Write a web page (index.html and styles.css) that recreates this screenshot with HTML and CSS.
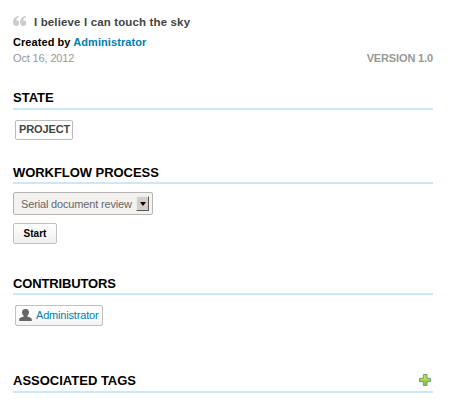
FILE: index.html
```html
<!DOCTYPE html>
<html lang="en">
<head>
<meta charset="utf-8">
<title>Document summary</title>
<link rel="stylesheet" href="styles.css">
</head>
<body>
<main class="summary">
  <header class="intro">
    <p class="description">
      <svg class="quote" width="14" height="10" viewBox="0 0 14 10"><path d="M5.800 0v1.400C4.200 1.900 3.200 2.900 3 4.300h.5C5.100 4.300 6.200 5.500 6.200 7.100S5 10 3.300 10C1.300 10 0 8.500 0 6.300 0 3 2 .5 5.800 0zM12.900 0v1.400c-1.600.5-2.600 1.500-2.800 2.900h.5c1.600 0 2.700 1.200 2.700 2.800S12.100 10 10.400 10C8.400 10 7.100 8.500 7.100 6.300 7.100 3 9.100.5 12.900 0z"/></svg>
      <span>I believe I can touch the sky</span>
    </p>
    <p class="creator">Created by <a>Administrator</a></p>
    <p class="meta"><span>Oct 16, 2012</span><strong>VERSION 1.0</strong></p>
  </header>

  <section class="state">
    <h3>STATE</h3>
    <span class="badge">PROJECT</span>
  </section>

  <section class="workflow">
    <h3 class="raised">WORKFLOW PROCESS</h3>
    <div class="select"><span>Serial document review</span><i class="arrow"><svg width="6" height="4" viewBox="0 0 6 4"><path d="M0 0h6L3 4z"/></svg></i></div>
    <button class="start">Start</button>
  </section>

  <section class="contributors">
    <h3 class="raised condensed">CONTRIBUTORS</h3>
    <a class="user"><svg width="13" height="12" viewBox="0 0 13 12"><path d="M6.500 0C9 0 10 1.300 10 3.300c0 1.500-.7 2.700-1.600 3.400v.7c.8.600 4.200.8 4.400 2.800V12H.2v-1.800c.2-2 3.600-2.200 4.400-2.800v-.7C3.700 6 3 4.800 3 3.300 3 1.300 4 0 6.500 0z"/></svg><span>Administrator</span></a>
  </section>

  <section class="tags">
    <h3>ASSOCIATED TAGS</h3>
    <svg class="add" width="12" height="12" viewBox="0 0 12 12">
      <defs><linearGradient id="leaf" x1="0" y1="0" x2="0" y2="1"><stop offset="0" stop-color="#b9d667"/><stop offset="1" stop-color="#86bb42"/></linearGradient></defs>
      <path fill="url(#leaf)" stroke="#6aa878" d="M4.500 .5h3.500v3.800h3.500v3.400H8v3.800H4.300V7.700H.5V4.300h3.800V.5z"/>
      <path fill="#c3d955" d="M5 2h2v3h3v1H2V5h3z"/>
    </svg>
  </section>
</main>
</body>
</html>
```

FILE: styles.css
```css
* { box-sizing: border-box; }

body {
  margin: 0;
  background: #fff;
  color: #000;
  font: 11px/16px "Liberation Sans", Arial, sans-serif;
}

.summary { width: 420px; margin-left: 13px; padding-top: 14px; }

p, h3 { margin: 0; }

.description {
  display: flex;
  align-items: flex-start;
  gap: 7px;
  height: 20px;
  color: #444;
  font-size: 11.5px;
  font-weight: bold;
  letter-spacing: .14px;
}
.quote { margin-top: 2px; fill: #ccc; }

.creator { font-weight: bold; letter-spacing: .07px; }
a { color: #0080ad; }

.meta {
  display: flex;
  justify-content: space-between;
  color: #999;
  letter-spacing: -.14px;
}

h3 {
  height: 22px;
  border-bottom: 2px solid #cae8fd;
  font-size: 13px;
  line-height: 20px;
}
.raised { line-height: 22px; letter-spacing: -.05px; }
.condensed { letter-spacing: -.15px; }

.state { height: 74px; margin-top: 22px; }
.workflow { height: 111px; }
.contributors { height: 98px; }

.badge {
  display: block;
  width: 58px;
  height: 20px;
  margin: 10px 0 0 2px;
  padding-left: 3px;
  border: 1px solid #bbb;
  border-radius: 2px;
  color: #444;
  font-weight: bold;
  line-height: 17px;
  letter-spacing: -.12px;
}

.select {
  display: flex;
  align-items: center;
  justify-content: space-between;
  width: 140px;
  height: 23px;
  margin-top: 8px;
  padding: 0 3px 0 7px;
  border: 1px solid #b4b4b4;
  border-radius: 2px;
  background: #f3f2f1;
  color: #666;
  letter-spacing: -.16px;
}
.arrow {
  display: flex;
  align-items: center;
  justify-content: center;
  width: 13px;
  height: 15px;
  border: 1px solid;
  border-color: #eee #555 #555 #eee;
  background: #d4d0c8;
}

.start {
  display: block;
  width: 44px;
  height: 21px;
  margin-top: 8px;
  padding: 0;
  border: 1px solid #c0c0c0;
  border-radius: 2px;
  background: linear-gradient(#fff, #efefef);
  color: #000;
  font: bold 10px/19px "Liberation Sans", Arial, sans-serif;
}

.user {
  display: flex;
  align-items: center;
  gap: 4px;
  width: 88px;
  height: 21px;
  margin: 10px 0 0 2px;
  padding: 0 0 1px 3px;
  border: 1px solid #c0c0c0;
  border-radius: 2px;
  background: linear-gradient(#fff 50%, #f3f3f3);
  letter-spacing: -.18px;
}
.user svg { fill: #666; }

.tags {
  display: flex;
  height: 22px;
  border-bottom: 2px solid #cae8fd;
  justify-content: space-between;
}
.tags h3 { border: 0; height: 20px; }
.add { margin: 3px 2px 0 0; }
```
